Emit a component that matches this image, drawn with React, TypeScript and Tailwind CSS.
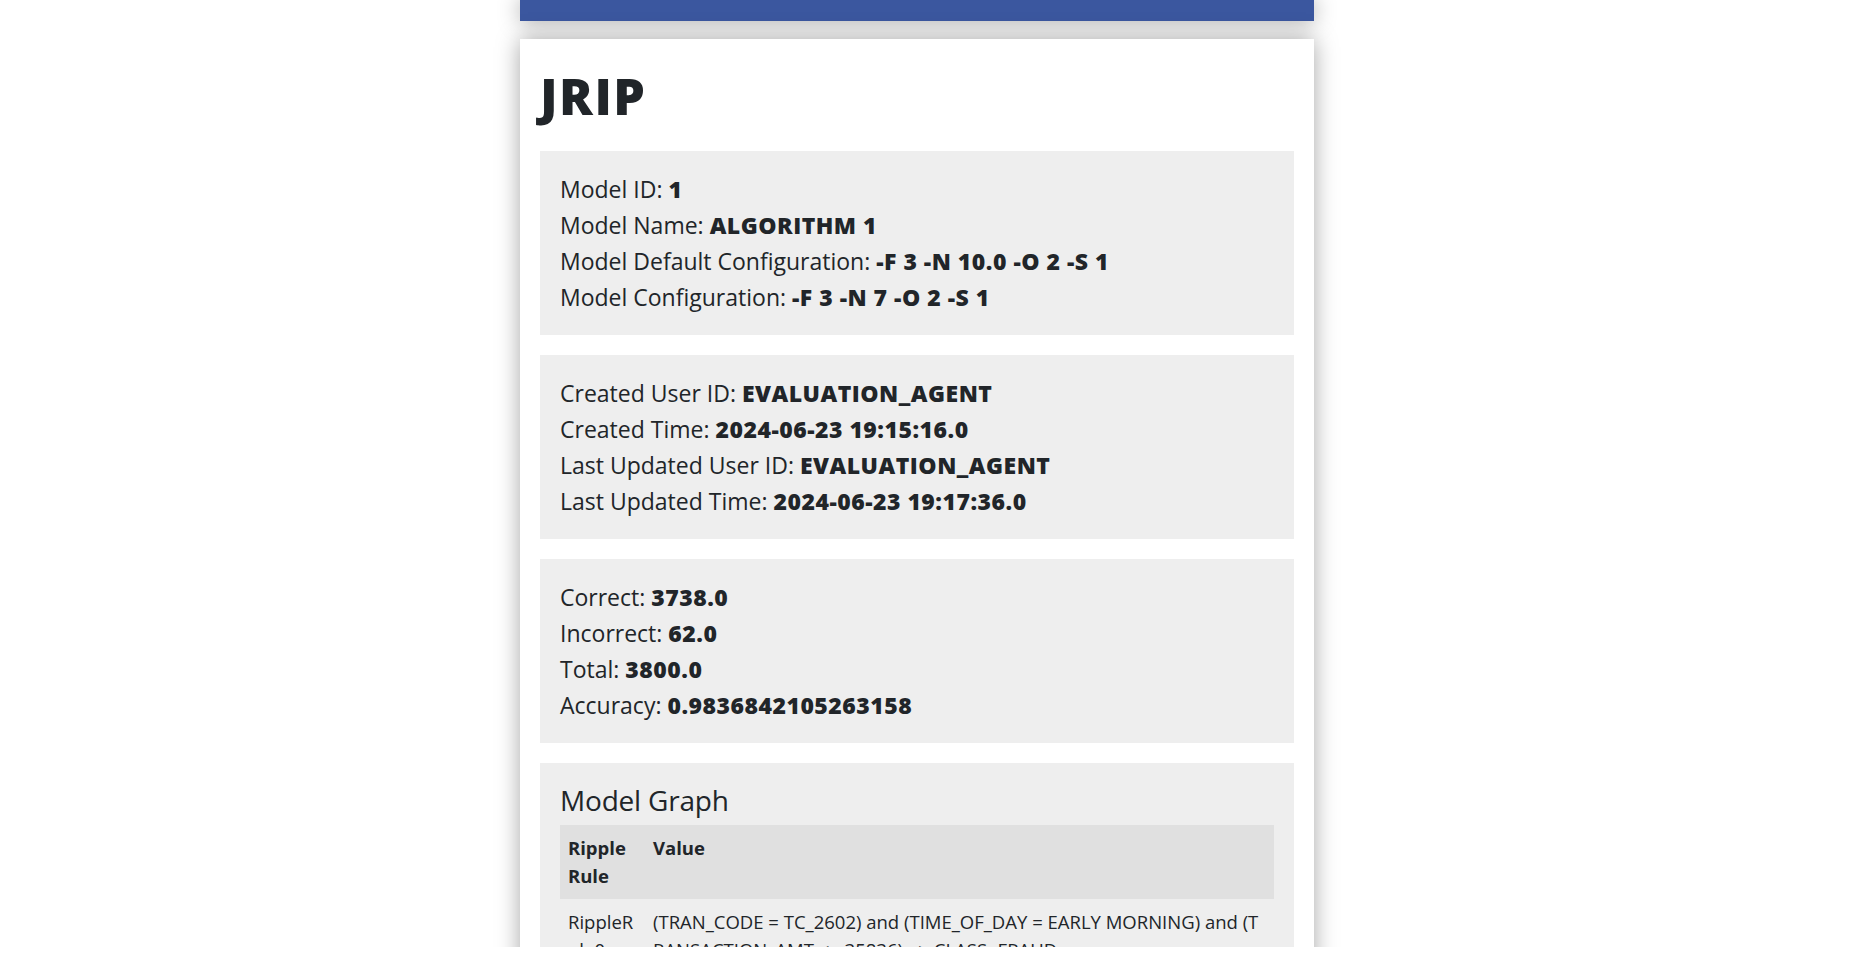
import React from "react";

type Field = { label: string; value: string };

const modelInfo: Field[] = [
  { label: "Model ID", value: "1" },
  { label: "Model Name", value: "ALGORITHM 1" },
  { label: "Model Default Configuration", value: "-F 3 -N 10.0 -O 2 -S 1" },
  { label: "Model Configuration", value: "-F 3 -N 7 -O 2 -S 1" },
];

const auditInfo: Field[] = [
  { label: "Created User ID", value: "EVALUATION_AGENT" },
  { label: "Created Time", value: "2024-06-23 19:15:16.0" },
  { label: "Last Updated User ID", value: "EVALUATION_AGENT" },
  { label: "Last Updated Time", value: "2024-06-23 19:17:36.0" },
];

const scoreInfo: Field[] = [
  { label: "Correct", value: "3738.0" },
  { label: "Incorrect", value: "62.0" },
  { label: "Total", value: "3800.0" },
  { label: "Accuracy", value: "0.9836842105263158" },
];

const rules = [
  {
    name: "RippleRule0",
    value:
      "(TRAN_CODE = TC_2602) and (TIME_OF_DAY = EARLY MORNING) and (TRANSACTION_AMT <= 35836) => CLASS=FRAUD",
  },
];

function InfoBlock({ fields }: { fields: Field[] }) {
  return (
    <div className="bg-[#eeeeee] p-5 text-[23px] leading-[36px]">
      {fields.map((f) => (
        <div key={f.label}>
          {f.label}: <span className="font-extrabold tracking-[0.5px]">{f.value}</span>
        </div>
      ))}
    </div>
  );
}

export default function App() {
  return (
    <div
      className="h-[956px] bg-white text-[#212529]"
      style={{ fontFamily: '"Open Sans", "Noto Sans", sans-serif' }}
    >
      <div className="h-[947px] overflow-hidden pr-[28px]">
        <div className="mx-auto w-[794px]">
          <div className="h-[21px] bg-[#3b579f] shadow-[0_0_22px_rgba(0,0,0,0.35)]" />
          <div className="mt-[18px] bg-white px-5 pb-5 pt-7 shadow-[0_0_22px_rgba(0,0,0,0.35)]">
            <h1 className="mb-[26px] text-[50px] font-extrabold leading-[58px] tracking-[1.5px]">JRIP</h1>
            <div className="flex flex-col gap-5">
              <InfoBlock fields={modelInfo} />
              <InfoBlock fields={auditInfo} />
              <InfoBlock fields={scoreInfo} />
              <div className="bg-[#eeeeee] p-5">
                <h3 className="mb-2 text-[28px] font-medium leading-[34px] tracking-[-0.2px]">Model Graph</h3>
                <table className="w-full table-fixed border-collapse text-[18.5px] leading-[28px]">
                  <colgroup>
                    <col className="w-[85px]" />
                    <col />
                  </colgroup>
                  <thead>
                    <tr className="bg-[#e0e0e0]">
                      <th className="px-2 py-[9px] text-left align-top font-bold">Ripple Rule</th>
                      <th className="px-2 py-[9px] text-left align-top font-bold">Value</th>
                    </tr>
                  </thead>
                  <tbody>
                    {rules.map((r) => (
                      <tr key={r.name}>
                        <td className="break-all px-2 py-[9px] align-top">{r.name}</td>
                        <td className="break-all px-2 py-[9px] align-top">{r.value}</td>
                      </tr>
                    ))}
                  </tbody>
                </table>
              </div>
            </div>
          </div>
        </div>
      </div>
    </div>
  );
}
